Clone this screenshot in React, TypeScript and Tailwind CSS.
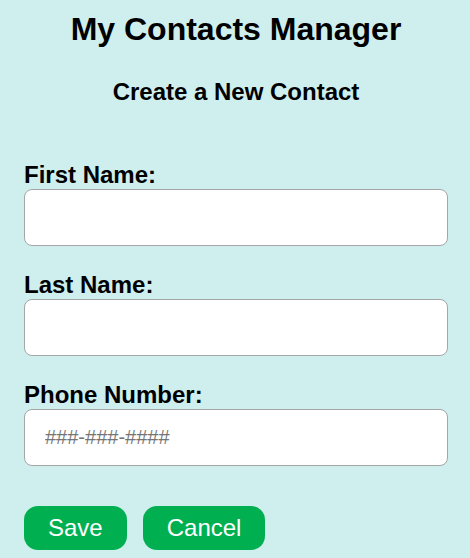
import React, { useState } from 'react';

const font = { fontFamily: '"Liberation Sans", Arial, sans-serif' };

const Field = ({ label, placeholder }: { label: string; placeholder?: string }) => {
  const [value, setValue] = useState('');
  return (
    <div className="flex flex-col">
      <label className="block text-[24px] leading-[28px] font-bold text-black">{label}</label>
      <input
        value={value}
        onChange={(e) => setValue(e.target.value)}
        placeholder={placeholder}
        className="h-[57px] w-full rounded-lg border border-[#a6a6a6] bg-white px-5 text-[20px] text-black outline-none placeholder:text-[#757575]"
        style={font}
      />
    </div>
  );
};

export default function App() {
  return (
    <div className="min-h-[558px] w-full bg-[#cfeeee] pl-6 pr-[22px] pt-[11px]" style={font}>
      <h1 className="text-center text-[32px] leading-[37px] font-bold text-black">My Contacts Manager</h1>
      <h2 className="mt-[30px] text-center text-[24px] leading-[28px] font-bold text-black">Create a New Contact</h2>

      <form className="mt-[55px] flex flex-col gap-[25px]" onSubmit={(e) => e.preventDefault()}>
        <Field label="First Name:" />
        <Field label="Last Name:" />
        <Field label="Phone Number:" placeholder="###-###-####" />

        <div className="mt-[15px] flex gap-4">
          <button type="submit" className="rounded-[14px] bg-[#00b050] px-6 py-2 text-[24px] leading-[28px] text-white">
            Save
          </button>
          <button type="button" className="rounded-[14px] bg-[#00b050] px-6 py-2 text-[24px] leading-[28px] text-white">
            Cancel
          </button>
        </div>
      </form>
    </div>
  );
}
